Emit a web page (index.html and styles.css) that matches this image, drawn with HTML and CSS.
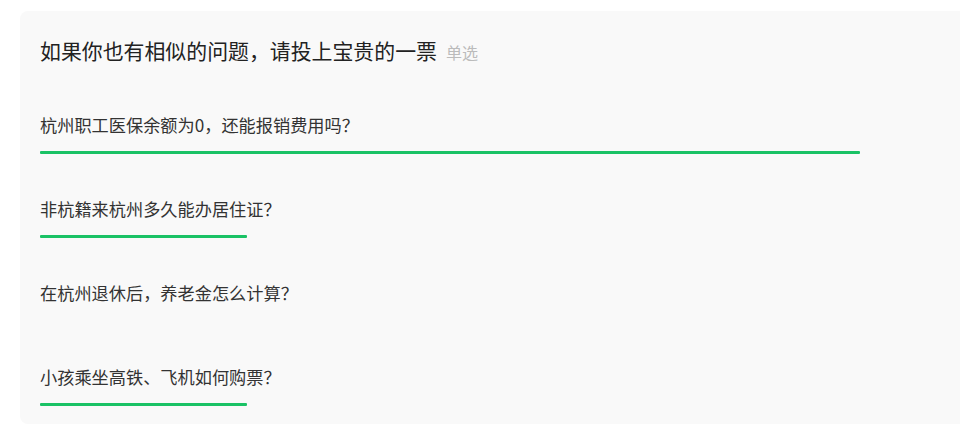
FILE: index.html
```html
<!DOCTYPE html>
<html lang="zh-CN">
<head>
<meta charset="utf-8">
<link rel="stylesheet" href="styles.css">
</head>
<body>
<div class="card">
  <div class="title">
    <span class="title-text">如果你也有相似的问题，请投上宝贵的一票</span>
    <span class="tag">单选</span>
  </div>
  <div class="options">
    <div class="option">
      <div class="option-text">杭州职工医保余额为0，还能报销费用吗？</div>
      <div class="bar" style="width:820px"></div>
    </div>
    <div class="option">
      <div class="option-text">非杭籍来杭州多久能办居住证？</div>
      <div class="bar" style="width:207px"></div>
    </div>
    <div class="option">
      <div class="option-text">在杭州退休后，养老金怎么计算？</div>
      <div class="bar" style="width:0px"></div>
    </div>
    <div class="option">
      <div class="option-text">小孩乘坐高铁、飞机如何购票？</div>
      <div class="bar" style="width:207px"></div>
    </div>
  </div>
</div>
</body>
</html>
```
FILE: styles.css
```css
html, body {
  margin: 0;
  padding: 0;
  background: #ffffff;
  overflow: hidden;
}
body {
  width: 960px;
  height: 424px;
  font-family: "Noto Sans CJK SC", "Noto Sans", sans-serif;
}
.card {
  margin: 11px 0 0 20px;
  width: 980px;
  box-sizing: border-box;
  background: #f9f9f9;
  border-radius: 8px;
  padding: 24px 20px 18px 20px;
}
.title {
  display: flex;
  align-items: baseline;
  line-height: 30px;
  height: 30px;
}
.title-text {
  font-size: 20.9px;
  color: #222222;
}
.tag {
  font-size: 16px;
  color: #bbbbbb;
  margin-left: 9px;
}
.options {
  display: flex;
  flex-direction: column;
  gap: 43px;
  margin-top: 48px;
}
.option {
  display: flex;
  flex-direction: column;
  gap: 14px;
}
.option-text {
  font-size: 17.2px;
  line-height: 24px;
  height: 24px;
  color: #333333;
}
.bar {
  height: 3px;
  background: #1ac265;
  border-radius: 1px;
}
```
